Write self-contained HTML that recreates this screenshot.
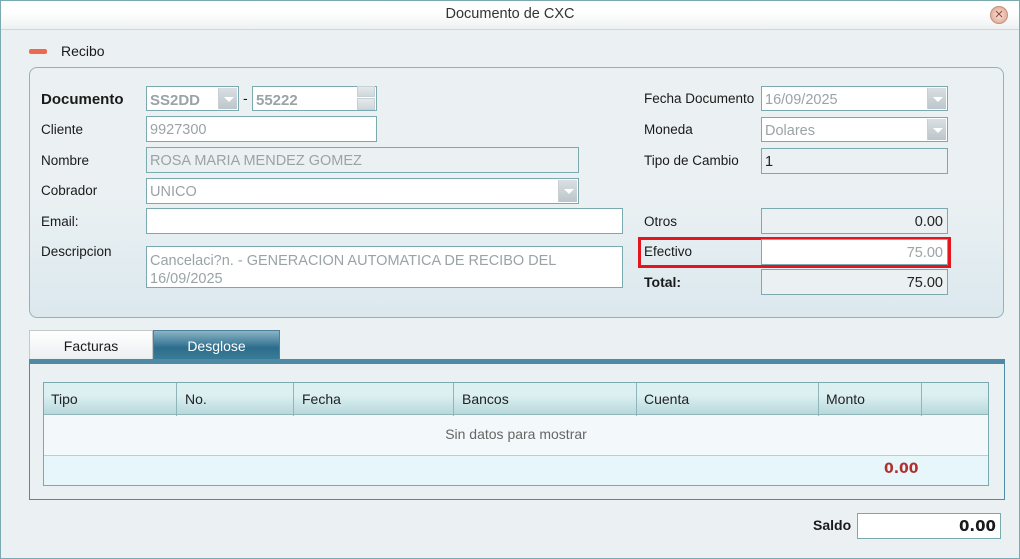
<!DOCTYPE html>
<html><head><meta charset="utf-8"><style>
*{box-sizing:border-box;margin:0;padding:0}
body{width:1020px;height:559px;overflow:hidden;background:#ebf0f3;font-family:"Liberation Sans",sans-serif;font-size:14px;color:#1a1a1a;position:relative}
.a{position:absolute}
.win{left:0;top:0;width:1020px;height:559px;border:1px solid #7aaab0}
.title{left:1px;top:1px;width:1018px;height:29px;background:linear-gradient(#fff,#fff 40%,#eef1f2);border-bottom:1px solid #cfd6d8;text-align:center;line-height:27px;font-size:14.5px;color:#333}
.lbl{font-size:13.5px;color:#1a1a1a}
.box{border:1px solid #7aaab0;background:#fff;color:#9aa3a6;font-size:14.5px;padding-left:3px;padding-top:2px;line-height:23px;white-space:nowrap;overflow:hidden}
.ro{background:#ebf0f2}
.dd{position:absolute;right:1px;top:1px;width:19px;height:21px;background:linear-gradient(#d9dfe2,#bcc6ca);border-left:1px solid #c8d0d3}
.dd:after{content:"";position:absolute;left:5px;top:9px;border-left:5px solid transparent;border-right:5px solid transparent;border-top:5px solid #fff}
.num{text-align:right;padding-right:4px;color:#222}
.grp{left:29px;top:67px;width:975px;height:251px;border:1px solid #8fb5bb;border-radius:8px;background:linear-gradient(#ebf1f3 50%,#dbe8ee)}
.col{position:absolute;top:0;height:33px;border-left:1px solid #8fb5bb}
.hd{position:absolute;top:8px;font-size:14px;color:#222}
</style></head><body>
<div class="a win"></div>
<div class="a title">Documento de CXC</div>
<div class="a" style="left:990px;top:6px;width:18px;height:18px;border-radius:50%;background:radial-gradient(#f6e3da,#d9a08a);border:1px solid #c98d78;color:#9a4a3a;font-size:15px;line-height:15px;text-align:center">×</div>
<div class="a" style="left:29px;top:49px;width:18px;height:5px;border-radius:2px;background:#ec6a4f"></div>
<div class="a lbl" style="left:61px;top:43px;font-size:14px">Recibo</div>
<div class="a grp"></div>

<div class="a" style="left:41px;top:91px;font-weight:bold;font-size:15px">Documento</div>
<div class="a box" style="left:146px;top:86px;width:93px;height:25px;font-weight:bold;font-size:15px">SS2DD<div class="dd"></div></div>
<div class="a" style="left:243px;top:90px">-</div>
<div class="a box" style="left:252px;top:86px;width:125px;height:25px;font-weight:bold;font-size:15px">55222</div>
<div class="a" style="left:357px;top:86px;width:18px;height:11px;background:linear-gradient(#e4e9eb,#cfd7da);border:1px solid #c8d0d3"></div>
<div class="a" style="left:357px;top:98px;width:18px;height:12px;background:linear-gradient(#e4e9eb,#cfd7da);border:1px solid #c8d0d3"></div>

<div class="a lbl" style="left:41px;top:122px">Cliente</div>
<div class="a box" style="left:146px;top:116px;width:231px;height:26px">9927300</div>
<div class="a lbl" style="left:41px;top:153px">Nombre</div>
<div class="a box ro" style="left:146px;top:147px;width:433px;height:26px">ROSA MARIA MENDEZ GOMEZ</div>
<div class="a lbl" style="left:41px;top:183px">Cobrador</div>
<div class="a box" style="left:146px;top:178px;width:433px;height:26px">UNICO<div class="dd" style="height:22px"></div></div>
<div class="a lbl" style="left:41px;top:214px">Email:</div>
<div class="a box" style="left:146px;top:208px;width:477px;height:26px"></div>
<div class="a lbl" style="left:41px;top:244px">Descripcion</div>
<div class="a box" style="left:146px;top:246px;width:477px;height:42px;line-height:18px;padding-top:5px;white-space:normal">Cancelaci?n. - GENERACION AUTOMATICA DE RECIBO DEL 16/09/2025</div>

<div class="a lbl" style="left:644px;top:91px">Fecha Documento</div>
<div class="a box" style="left:761px;top:86px;width:187px;height:25px">16/09/2025<div class="dd"></div></div>
<div class="a lbl" style="left:644px;top:122px">Moneda</div>
<div class="a box" style="left:761px;top:117px;width:187px;height:25px">Dolares<div class="dd"></div></div>
<div class="a lbl" style="left:644px;top:153px">Tipo de Cambio</div>
<div class="a box ro" style="left:761px;top:148px;width:187px;height:26px;color:#222">1</div>
<div class="a lbl" style="left:644px;top:214px">Otros</div>
<div class="a box ro num" style="left:761px;top:208px;width:187px;height:26px">0.00</div>
<div class="a" style="left:638px;top:237px;width:313px;height:31px;border:3px solid #e3161f"></div>
<div class="a lbl" style="left:644px;top:244px">Efectivo</div>
<div class="a box num" style="left:761px;top:239px;width:187px;height:26px;color:#9aa3a6">75.00</div>
<div class="a lbl" style="left:644px;top:274px;font-weight:bold;font-size:14px">Total:</div>
<div class="a box ro num" style="left:761px;top:269px;width:187px;height:26px">75.00</div>

<div class="a" style="left:29px;top:330px;width:124px;height:30px;border:1px solid #c4c9cb;border-bottom:none;background:linear-gradient(#fff,#eceff0);text-align:center;line-height:31px">Facturas</div>
<div class="a" style="left:153px;top:330px;width:127px;height:30px;border:1px solid #4d8199;background:linear-gradient(#8ab4c6,#2c6d8c 60%,#3a7b97);color:#fff;text-align:center;line-height:30px">Desglose</div>
<div class="a" style="left:29px;top:359px;width:976px;height:141px;border:1px solid #4d8ba6;border-top:5px solid #4f8aa4;background:#ebf0f3"></div>

<div class="a" style="left:43px;top:382px;width:946px;height:104px;border:1px solid #7aaab0;background:#f3f8fa"></div>
<div class="a" style="left:44px;top:383px;width:944px;height:32px;background:linear-gradient(#dcf0f2 40%,#b8d8db);border-bottom:1px solid #8fb5bb">
<div class="col" style="left:132px"></div><div class="col" style="left:249px"></div><div class="col" style="left:409px"></div><div class="col" style="left:592px"></div><div class="col" style="left:774px"></div><div class="col" style="left:877px"></div>
<div class="hd" style="left:7px">Tipo</div><div class="hd" style="left:141px">No.</div><div class="hd" style="left:258px">Fecha</div><div class="hd" style="left:418px">Bancos</div><div class="hd" style="left:600px">Cuenta</div><div class="hd" style="left:782px">Monto</div>
</div>
<div class="a" style="left:44px;top:426px;width:944px;text-align:center;color:#666;font-size:14px">Sin datos para mostrar</div>
<div class="a" style="left:44px;top:455px;width:944px;height:30px;background:#e6f6fa;border-top:1px solid #b5cfd4"></div>
<div class="a" style="left:884px;top:461px;color:#b0302e;font-weight:bold;font-size:14px;font-family:'DejaVu Sans',sans-serif">0.00</div>

<div class="a" style="left:813px;top:517px;font-weight:bold;font-size:14px">Saldo</div>
<div class="a" style="left:857px;top:513px;width:144px;height:26px;border:1px solid #7aaab0;background:#fff;text-align:right;padding-right:4px;line-height:24px;font-weight:bold;font-family:'DejaVu Sans',sans-serif;font-size:15px">0.00</div>
</body></html>
